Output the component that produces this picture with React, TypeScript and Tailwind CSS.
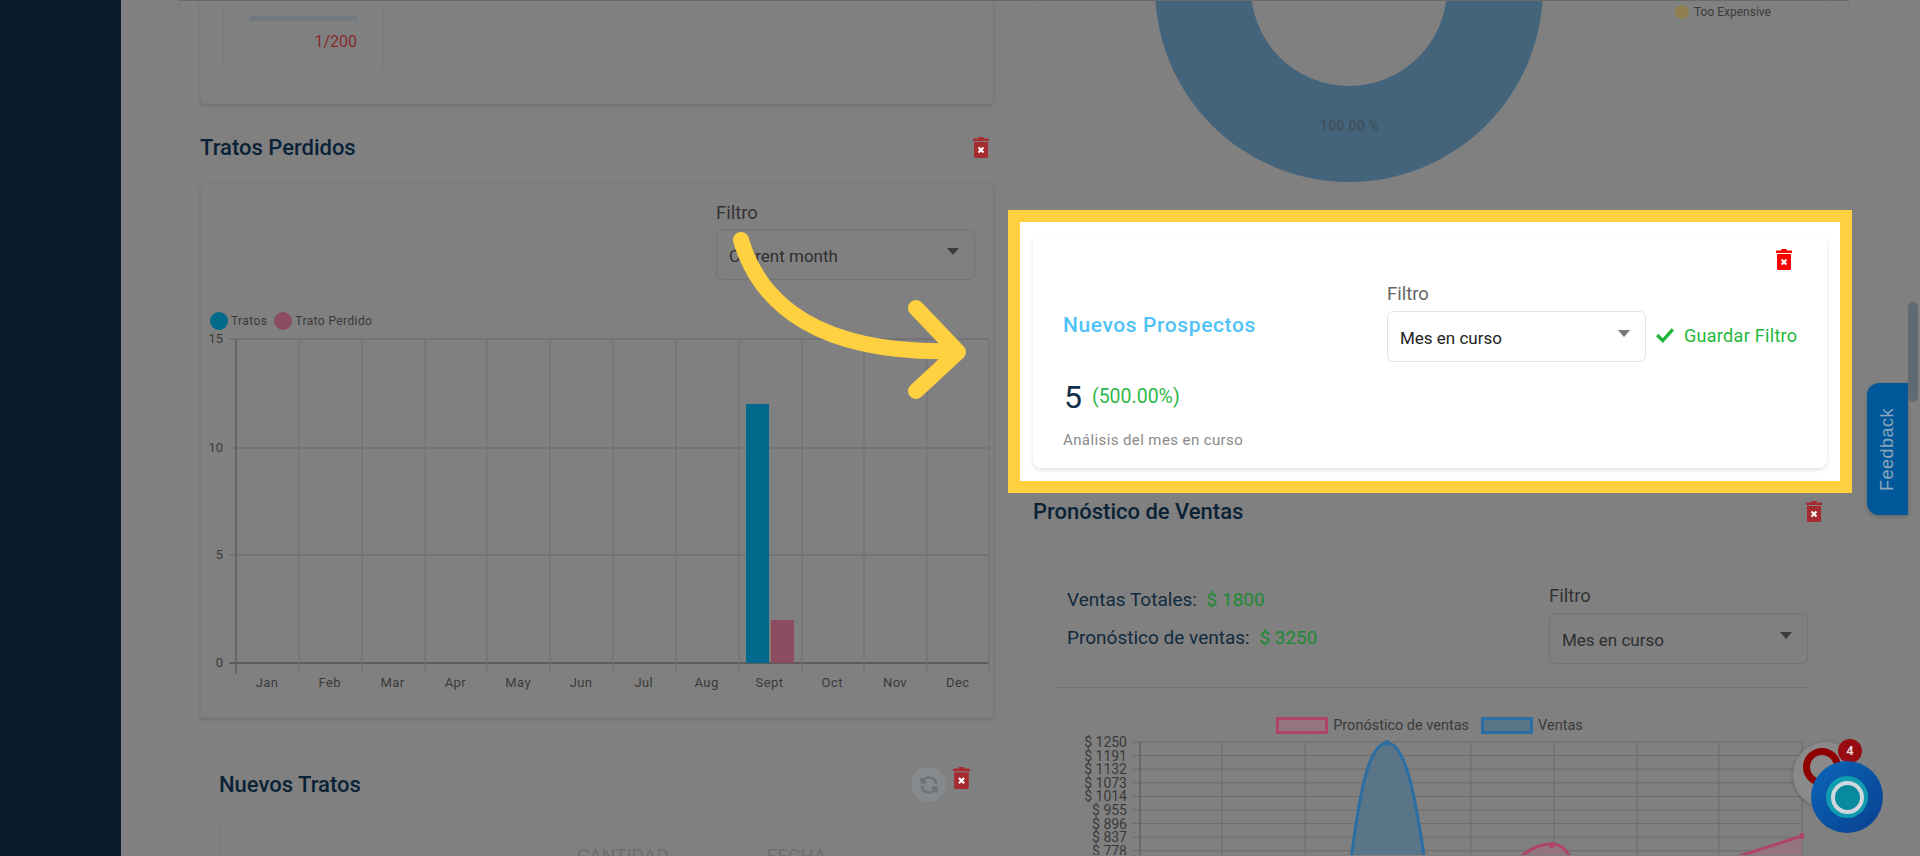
import React from 'react';

const months = ['Jan', 'Feb', 'Mar', 'Apr', 'May', 'Jun', 'Jul', 'Aug', 'Sept', 'Oct', 'Nov', 'Dec'];
const forecastTicks = ['$ 1250', '$ 1191', '$ 1132', '$ 1073', '$ 1014', '$ 955', '$ 896', '$ 837', '$ 778'];

const TrashIcon = ({ color, className }: { color: string; className: string }) => (
  <svg viewBox="0 0 16 21" className={className}>
    <rect x="5.5" y="0" width="5" height="2" fill={color} />
    <rect x="0" y="1.5" width="16" height="2.5" rx="0.5" fill={color} />
    <path d="M1 5h14v14.5a1.5 1.5 0 0 1-1.5 1.5h-11A1.5 1.5 0 0 1 1 19.5z" fill={color} />
    <path d="M5.5 10.5l5 5M10.5 10.5l-5 5" stroke="#fff" strokeWidth="2" />
  </svg>
);

const Caret = ({ color }: { color: string }) => (
  <span className="block h-0 w-0 border-x-[6px] border-t-[7px] border-x-transparent" style={{ borderTopColor: color }} />
);

const FilterSelect = ({ value, dim }: { value: string; dim?: boolean }) => (
  <div className={`flex h-[51px] w-[259px] items-start justify-between rounded-md border px-3 pt-[16px] ${dim ? 'border-[#747474]' : 'border-[#e4e4e4] bg-white'}`}>
    <span className={`text-[17px] leading-[20px] ${dim ? 'text-[#2e2e2e]' : 'text-[#222222]'}`}>{value}</span>
    <span className="mt-[2px] mr-[3px]">
      <Caret color={dim ? '#3c3c3c' : '#777777'} />
    </span>
  </div>
);

const LostDealsChart = () => (
  <svg viewBox="0 0 790 360" className="h-[360px] w-[790px]">
    {[338, 447, 554, 662].map((y) => (
      <line key={y} x1="24" x2="784" y1={y - 330} y2={y - 330} stroke={y === 662 ? '#5c5c5c' : '#707070'} strokeWidth={y === 662 ? 2 : 1.5} />
    ))}
    {[236, 299, 362, 425, 487, 550, 613, 676, 739, 802, 864, 927, 989].map((x, i) => (
      <line key={x} x1={x - 205} x2={x - 205} y1="8" y2="343" stroke={i === 0 ? '#5c5c5c' : '#707070'} strokeWidth={i === 0 ? 1.5 : 1} />
    ))}
    <rect x="541" y="73" width="23" height="259" fill="#00698c" />
    <rect x="566" y="289" width="23" height="43" fill="#8c4d60" />
    {[['15', 338], ['10', 447], ['5', 554], ['0', 662]].map(([t, y]) => (
      <text key={t} x="18" y={Number(y) - 326} textAnchor="end" fontSize="13" fill="#3a3a3a">{t}</text>
    ))}
    {months.map((m, i) => (
      <text key={m} x={62 + i * 62.8} y="356" textAnchor="middle" fontSize="13" letterSpacing="0.4" fill="#3a3a3a">{m}</text>
    ))}
  </svg>
);

const ForecastChart = () => (
  <svg viewBox="0 0 724 120" className="h-[120px] w-[724px] overflow-hidden">
    {forecastTicks.map((t, i) => (
      <g key={t}>
        <line x1="52" x2="722" y1={7 + i * 13.6} y2={7 + i * 13.6} stroke="#6c6c6c" />
        <text x="47" y={12 + i * 13.6} textAnchor="end" fontSize="14" fill="#3a3a3a">{t}</text>
      </g>
    ))}
    {[60, 142, 225, 307, 391, 474, 557, 639, 722].map((x) => (
      <line key={x} x1={x} x2={x} y1="7" y2="120" stroke={x === 60 ? '#555555' : '#6c6c6c'} />
    ))}
    <path d="M270 134C280 50 290 8 307 8S334 50 346 134z" fill="#5a7488" stroke="#2a6ea3" strokeWidth="3" />
    <path d="M434 130C446 114 460 109 472 109C482 109 488 116 494 130z" fill="#94747f" stroke="#b04468" strokeWidth="3" />
    <path d="M650 124L722 101V130H650z" fill="#94747f" />
    <path d="M650 124L722 101" stroke="#b04468" strokeWidth="3" />
    <circle cx="307" cy="8" r="3" fill="#2a6ea3" />
    <circle cx="472" cy="110" r="3" fill="#b04468" />
    <circle cx="722" cy="101" r="3" fill="#b04468" />
  </svg>
);

export default function App() {
  return (
    <div className="relative flex h-[856px] w-[1920px] overflow-hidden bg-[#808080] font-['Roboto',sans-serif]">
      <aside className="w-[121px] shrink-0 bg-[#0a1c2b]" />
      <main className="ml-[57px] flex w-[1672px] gap-[39px] border-x border-t border-x-[#7b7b7b] border-t-[#6a6a6a] pl-[21px] pr-[23px]">
        {/* left column */}
        <div className="w-[794px] shrink-0">
          <section className="h-[103px] rounded-b border-x border-b border-[#7c7c7c] pl-[22px] shadow-[0_2px_3px_rgba(0,0,0,0.12)]">
            <div className="h-[73px] w-[161px] rounded-b-lg border-x border-b border-[#7b7b7b] px-[26px] pt-[15px]">
              <div className="h-[5px] w-[107px] bg-[#72787f]" />
              <p className="mt-[11px] text-right text-[16px] leading-[20px] text-[#862a2a]">1/200</p>
            </div>
          </section>

          <div className="mt-[33px] flex h-[21px] items-center justify-between pr-[5px]">
            <h2 className="text-[22px] font-medium text-[#0a2236]">Tratos Perdidos</h2>
            <TrashIcon color="#a52b30" className="h-[21px] w-[16px]" />
          </div>

          <section className="relative mt-[25px] h-[535px] rounded border border-[#7b7b7b] shadow-[0_2px_3px_rgba(0,0,0,0.12)]">
            <div className="absolute left-[515px] top-[19px]">
              <p className="mb-[5px] text-[18.5px] leading-[21px] text-[#333333]">Filtro</p>
              <FilterSelect value="Current month" dim />
            </div>
            <div className="absolute left-[9px] top-[128px] flex items-center text-[12px] tracking-[0.4px] text-[#3a3a3a]">
              <span className="mr-[3px] size-[18px] rounded-full bg-[#00698c]" />
              <span className="mr-[7px]">Tratos</span>
              <span className="mr-[3px] size-[18px] rounded-full bg-[#8c4d60]" />
              <span>Trato Perdido</span>
            </div>
            <div className="absolute left-[4px] top-[147px]">
              <LostDealsChart />
            </div>
          </section>

          <section className="mt-[30px] rounded-t border-x border-t border-[#7c7c7c] px-[18px] pt-[18px]">
            <div className="flex h-[35px] items-center justify-between">
              <h2 className="text-[22px] font-medium text-[#0a2236]">Nuevos Tratos</h2>
              <div className="flex items-start gap-[7px] pr-[5px]">
                <span className="flex size-[35px] items-center justify-center rounded-full bg-[#868a8d] text-[#6a7178]">
                  <svg viewBox="0 0 24 24" className="size-[22px]" fill="none" stroke="currentColor" strokeWidth="2.6">
                    <path d="M20 11a8 8 0 0 0-14-4.5L4 9M4 4v5h5M4 13a8 8 0 0 0 14 4.5l2-2.5M20 20v-5h-5" />
                  </svg>
                </span>
                <TrashIcon color="#a52b30" className="h-[22px] w-[17px]" />
              </div>
            </div>
            <div className="mt-[21px] h-[40px] rounded-t border-x border-t border-[#7b7b7b] pt-[22px]">
              <div className="ml-[357px] flex gap-[98px] text-[19px] leading-[20px] text-[#6e6e6e]">
                <span>CANTIDAD</span>
                <span>FECHA</span>
              </div>
            </div>
          </section>
        </div>

        {/* right column */}
        <div className="w-[794px] shrink-0">
          <section className="relative h-[204px] overflow-hidden border-x border-b border-[#7c7c7c]">
            <div className="absolute left-[121px] top-[-207px] flex size-[388px] items-center justify-center rounded-full bg-[#44647c]">
              <div className="size-[196px] rounded-full bg-[#808080]" />
            </div>
            <span className="absolute left-[286px] top-[115px] text-[14px] font-medium tracking-[0.2px] text-[#3f4f5a]">100.00 %</span>
            <div className="absolute left-[641px] top-[2px] flex items-center gap-[5px] text-[12px] text-[#3a3a3a]">
              <span className="size-[14px] rounded-full bg-[#8f7f50]" />
              Too Expensive
            </div>
          </section>

          {/* highlighted card, wider than the column */}
          <div className="relative z-10 mx-[-25px] mt-[5px] h-[283px] w-[844px] border-[12px] border-[#ffd040] bg-white px-[13px] pt-[14px]">
            <div className="relative h-[232px] rounded-lg bg-white shadow-[0_2px_4px_rgba(0,0,0,0.12)]">
              <TrashIcon color="#ff0000" className="absolute right-[35px] top-[13px] h-[21px] w-[16px]" />
              <div className="flex pl-[30px] pt-[48px]">
                <h3 className="mt-[29px] w-[324px] text-[21px] font-medium leading-[24px] tracking-[0.6px] text-[#4fc3f7]">Nuevos Prospectos</h3>
                <div>
                  <p className="mb-[6px] text-[18.5px] leading-[21px] text-[#666666]">Filtro</p>
                  <FilterSelect value="Mes en curso" />
                </div>
                <div className="ml-[9px] mt-[39px] flex h-[24px] items-center gap-[9px] text-[18px] tracking-[0.3px] text-[#22b83a]">
                  <svg viewBox="0 0 18 14" className="h-[16px] w-[20px]">
                    <path d="M2 7l5 5L16 2" fill="none" stroke="#1fb537" strokeWidth="3" />
                  </svg>
                  Guardar Filtro
                </div>
              </div>
              <div className="mt-[16px] flex items-center gap-[10px] pl-[31px]">
                <span className="text-[32px] leading-[38px] text-[#12304a]">5</span>
                <span className="text-[19.5px] text-[#2db84a]">(500.00%)</span>
              </div>
              <p className="mt-[15px] pl-[30px] text-[15px] leading-[18px] tracking-[0.4px] text-[#8a8a8a]">Análisis del mes en curso</p>
            </div>
          </div>

          <div className="mt-[8px] flex h-[21px] items-center justify-between pr-[5px]">
            <h2 className="text-[22px] font-medium text-[#0a2236]">Pronóstico de Ventas</h2>
            <TrashIcon color="#a52b30" className="h-[21px] w-[16px]" />
          </div>

          <section className="mt-[24px] h-[320px] border-x border-t border-[#7b7b7b] pl-[21px] pr-[18px] pt-[40px]">
            <div className="flex justify-between">
              <div className="pl-[12px] text-[19px] leading-[24px] text-[#102a3e]">
                <p className="mt-[1px]">Ventas Totales: <span className="ml-[5px] text-[#1d8a33]">$ 1800</span></p>
                <p className="mt-[14px]">Pronóstico de ventas: <span className="ml-[5px] text-[#1d8a33]">$ 3250</span></p>
              </div>
              <div className="mt-[-1px]">
                <p className="mb-[6px] text-[18.5px] leading-[21px] text-[#333333]">Filtro</p>
                <FilterSelect value="Mes en curso" dim />
              </div>
            </div>
            <div className="mt-[23px] border-t border-[#747474]" />
            <div className="mt-[29px] flex h-[17px] items-center justify-center pr-[4px] text-[14.5px] text-[#3a3a3a]">
              <span className="mr-[5px] h-[17px] w-[52px] border-[3px] border-[#b04468] bg-[#94747f]" />
              <span className="mr-[12px]">Pronóstico de ventas</span>
              <span className="mr-[5px] h-[17px] w-[52px] border-[3px] border-[#2a6ea3] bg-[#5a7488]" />
              <span>Ventas</span>
            </div>
            <div className="mt-[1px] ml-[25px]">
              <ForecastChart />
            </div>
          </section>
        </div>
      </main>

      {/* feedback tab and scrollbar */}
      <div className="absolute left-[1867px] top-[383px] flex h-[132px] w-[41px] items-center justify-center rounded-l-xl bg-[#00589a] shadow-[0_2px_4px_rgba(0,0,0,0.2)]">
        <span className="-rotate-90 font-['Liberation_Sans',sans-serif] text-[18px] tracking-[0.5px] text-[#8ba6ba]">Feedback</span>
      </div>
      <div className="absolute left-[1908px] top-[302px] h-[100px] w-[10px] rounded-full bg-[#5f6a75]" />

      {/* chat widget */}
      <div className="absolute left-[1793px] top-[742px] size-[66px] overflow-hidden rounded-full bg-[#8a8a8a] shadow-[0_1px_4px_rgba(0,0,0,0.25)]">
        <span className="absolute left-[10px] top-[6px] size-[38px] rounded-full border-[7px] border-[#8f0000]" />
      </div>
      <span className="absolute left-[1838px] top-[739px] flex size-[24px] items-center justify-center rounded-full bg-[#990d12] text-[13px] font-bold text-[#e4d8d8]">4</span>
      <div className="absolute left-[1811px] top-[761px] flex size-[72px] items-center justify-center rounded-full bg-[linear-gradient(135deg,#0a66b8,#0a3f90)]">
        <div className="flex size-[42px] items-center justify-center rounded-full bg-[#0e9cae]">
          <div className="size-[33px] rounded-full border-[4px] border-[#cfd8dc] bg-[#088a9e]" />
        </div>
      </div>

      {/* arrow pointing at the highlighted card */}
      <svg className="absolute left-[720px] top-[225px] z-20 h-[190px] w-[270px]" viewBox="0 0 270 190" fill="none" stroke="#ffd040" strokeWidth="16" strokeLinecap="round" strokeLinejoin="round">
        <path d="M21 15C40 80 100 130 236 126" />
        <path d="M196 83L238 127L196 166" />
      </svg>
    </div>
  );
}
